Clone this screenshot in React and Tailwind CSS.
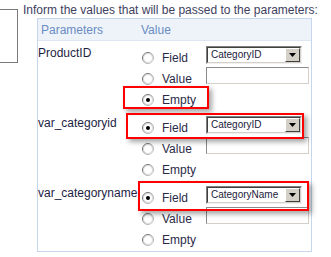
import React from "react";

const params = [
  { name: "ProductID", checked: "Empty", field: "CategoryID" },
  { name: "var_categoryid", checked: "Field", field: "CategoryID" },
  { name: "var_categoryname", checked: "Field", field: "CategoryName" },
];

const Radio = ({ on }) => (
  <svg width="12" height="12" viewBox="0 0 12 12" className="shrink-0">
    <defs>
      <linearGradient id="rg" x1="0" y1="0" x2="1" y2="1">
        <stop offset="0" stopColor="#555" />
        <stop offset="1" stopColor="#d8d8d8" />
      </linearGradient>
    </defs>
    <circle cx="6" cy="6" r="5.5" fill="#fff" stroke="url(#rg)" />
    <circle cx="6" cy="6" r="4.5" fill="none" stroke="#cfcfcf" strokeWidth="0.8" />
    {on && <circle cx="6" cy="6" r="2" fill="#000" />}
  </svg>
);

const Select = ({ value }) => (
  <div className="flex h-[18px] w-[96px] self-start mt-[-1px] border border-[#808080] border-b-[#f0f0f0] border-r-[#f0f0f0]">
    <div className="flex flex-1 items-center bg-white border border-[#404040] border-b-[#d4d0c8] border-r-[#d4d0c8]">
      <span className="flex-1 pl-[3px] text-[10px] leading-none text-[#1a1a3a]">{value}</span>
      <span className="flex h-full w-[15px] items-center justify-center bg-[#d4d0c8] border border-white border-b-[#404040] border-r-[#404040]">
        <svg width="7" height="4" viewBox="0 0 7 4">
          <path d="M0 0h7L3.5 4z" fill="#000" />
        </svg>
      </span>
    </div>
  </div>
);

const Option = ({ label, on, children }) => (
  <div className="flex h-[21px] items-center">
    <Radio on={on} />
    <span className="ml-[8px] w-[44px] text-[12px] leading-[14px] text-[#2a2a48]">{label}</span>
    {children}
  </div>
);

const App = () => {
  return (
    <div className="relative h-[257px] w-[331px] overflow-hidden bg-white font-['Liberation_Sans',Arial,sans-serif]">
      <div className="flex">
        <div className="ml-[-1px] mt-[9px] h-[54px] w-[19px] border border-[#7a7a7a]" />
        <div className="ml-[5px] flex flex-col">
          <p className="pt-[3px] text-[12px] leading-[14px] text-[#3e3e5e] whitespace-nowrap">
            Inform the values that will be passed to the parameters:
          </p>
          <div className="ml-[14px] mt-[1px] w-[275px] border border-[#c6d6ec]">
            <div className="flex h-[22px] items-center bg-[#eef3fa] border-b border-[#dde7f4] text-[12px] text-[#6a8bc4]">
              <span className="w-[100px] pl-[3px]">Parameters</span>
              <span className="pl-[3px]">Value</span>
            </div>
            {params.map((p) => (
              <div key={p.name} className="flex">
                <div className="w-[100px] pt-[5px] text-[12px] leading-[14px] text-[#1e1e44] whitespace-nowrap">
                  {p.name}
                </div>
                <div className="flex flex-col pl-[4px] pt-[6px] pb-[1px]">
                  <Option label="Field" on={p.checked === "Field"}>
                    <Select value={p.field} />
                  </Option>
                  <Option label="Value" on={p.checked === "Value"}>
                    <div className="self-start mt-[-1px] h-[17px] w-[103px] bg-white border border-[#8a8a8a] border-b-[#d4d0c8] border-r-[#d4d0c8]" />
                  </Option>
                  <Option label="Empty" on={p.checked === "Empty"} />
                </div>
              </div>
            ))}
          </div>
        </div>
      </div>

      {/* red annotation boxes */}
      <div className="absolute left-[123px] top-[86px] h-[23px] w-[86px] border-2 border-[#f00] shadow-[3px_3px_5px_rgba(0,0,0,0.35)]" />
      <div className="absolute left-[126px] top-[113px] h-[26px] w-[178px] border-2 border-[#f00] shadow-[3px_3px_5px_rgba(0,0,0,0.35)]" />
      <div className="absolute left-[138px] top-[181px] h-[30px] w-[171px] border-2 border-[#f00] shadow-[3px_3px_5px_rgba(0,0,0,0.35)]" />
    </div>
  );
};

export default App;
